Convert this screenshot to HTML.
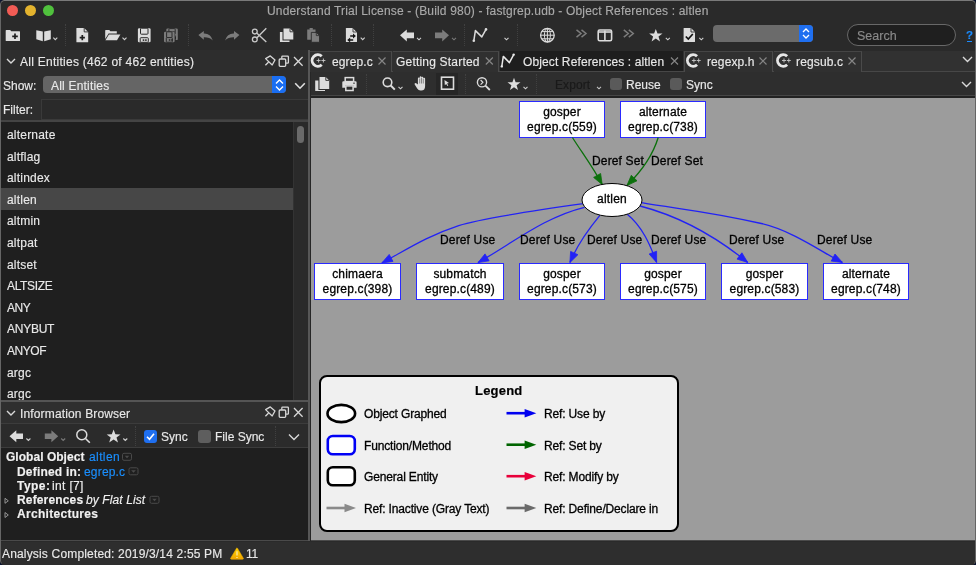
<!DOCTYPE html>
<html><head><meta charset="utf-8">
<style>
html,body{margin:0;padding:0;}
body{width:976px;height:565px;overflow:hidden;background:#0b1430;position:relative;font-family:"Liberation Sans",sans-serif;}
#win{position:absolute;left:0;top:0;width:976px;height:565px;background:#2a2a2a;border-radius:4.5px;overflow:hidden;}
.a{position:absolute;}
.t{position:absolute;font-size:12px;line-height:12px;white-space:nowrap;color:#e8e8e8;will-change:transform;-webkit-text-stroke:0.15px currentColor;}
svg{position:absolute;overflow:visible;}
.sep{position:absolute;width:0;border-left:1px dotted #404040;}
.g{position:absolute;will-change:transform;-webkit-text-stroke:0.3px currentColor;font-size:12px;line-height:14.5px;letter-spacing:0.15px;color:#000;text-align:center;white-space:nowrap;}
.node{position:absolute;background:#fff;border:1px solid #2a2aff;box-sizing:border-box;}
</style></head><body>
<div id="win">
<!-- title bar -->

<div class="a" style="left:7px;top:5px;width:11px;height:11px;border-radius:50%;background:#f25c55"></div>
<div class="a" style="left:25px;top:5px;width:11px;height:11px;border-radius:50%;background:#e3b32e"></div>
<div class="a" style="left:43px;top:5px;width:11px;height:11px;border-radius:50%;background:#50c13d"></div>
<div class="t" style="left:266.5px;top:5px;color:#a9a9a9;letter-spacing:0.17px">Understand Trial License - (Build 980) - fastgrep.udb - Object References : altlen</div>

<!-- toolbar separators -->
<div class="sep" style="left:65px;top:24px;height:22px"></div>
<div class="sep" style="left:188px;top:24px;height:22px"></div>
<div class="sep" style="left:331px;top:24px;height:22px"></div>
<div class="sep" style="left:373px;top:24px;height:22px"></div>
<div class="sep" style="left:464px;top:24px;height:22px"></div>
<div class="sep" style="left:517px;top:24px;height:22px"></div>

<!-- combo + search -->
<div class="a" style="left:713px;top:25px;width:100px;height:17px;border-radius:4px;background:#6b6b6b;overflow:hidden">
  <div class="a" style="left:86px;top:0;width:14px;height:17px;background:#1f6ff0"></div>
</div>
<svg style="left:799px;top:26px" width="14" height="15" viewBox="0 0 14 15"><path d="M4 6 L7 3 L10 6 M4 9 L7 12 L10 9" fill="none" stroke="#fff" stroke-width="1.3"/></svg>
<div class="a" style="left:847px;top:24px;width:109px;height:22px;border-radius:11px;border:1.5px solid #686868;box-sizing:border-box;background:#1f1f1f"></div>
<div class="t" style="left:857px;top:30px;font-size:12.5px;color:#8a8a8a">Search</div>
<div class="t" style="left:966.2px;top:30px;color:#1a8cff;font-weight:bold;font-size:11.5px;line-height:11.5px">?</div>
<div class="a" style="left:966.8px;top:41px;width:5.4px;height:1px;background:#1a8cff"></div>

<!-- left panel -->
<div class="a" style="left:0;top:50px;width:309px;height:491px;background:#2d2d2d"></div>

<div class="t" style="left:20px;top:55.5px;letter-spacing:0.26px;color:#e8e8e8">All Entities (462 of 462 entities)</div>
<svg style="left:6px;top:58px" width="10" height="7" viewBox="0 0 10 7"><path d="M1 1 L5 5 L9 1" fill="none" stroke="#d8d8d8" stroke-width="1.4"/></svg>
<div class="t" style="left:3px;top:80px;letter-spacing:0px">Show:</div>
<div class="a" style="left:43.3px;top:76.2px;width:243px;height:17.3px;border-radius:4px;background:#656565;overflow:hidden">
  <div class="a" style="left:228.8px;top:0;width:15px;height:18px;background:#1a6ef2"></div>
</div>
<svg style="left:271.8px;top:76.8px" width="15" height="16" viewBox="0 0 15 16"><path d="M4 6.5 L7.5 3 L11 6.5 M4 9.5 L7.5 13 L11 9.5" fill="none" stroke="#fff" stroke-width="1.3"/></svg>
<div class="t" style="left:51px;top:80px;letter-spacing:0.2px;color:#e8e8e8">All Entities</div>
<svg style="left:294.2px;top:82px" width="12" height="8" viewBox="0 0 12 8"><path d="M1.2 1.2 L6 6.2 L10.8 1.2" fill="none" stroke="#e0e0e0" stroke-width="1.6"/></svg>
<div class="t" style="left:3px;top:104px">Filter:</div>
<div class="a" style="left:41px;top:99px;width:268px;height:21px;background:#2a2a2a;border:1px solid #3a3a3a;border-right:none;box-sizing:border-box"></div>
<div class="a" style="left:0px;top:120px;width:309px;height:2px;background:#444"></div>
<!-- list -->
<div class="a" style="left:1px;top:122px;width:307px;height:278px;background:#1f1f1f"></div>
<div class="a" style="left:293px;top:122px;width:15px;height:278px;background:#2a2a2a;border-left:1px solid #333"></div>
<div class="a" style="left:297px;top:126px;width:7px;height:17px;border-radius:4px;background:#6a6a6a"></div>
<div class="a" style="left:1px;top:188px;width:292px;height:22px;background:#474747"></div>
<div class="t" style="left:7px;top:129px;letter-spacing:0.2px">alternate</div>
<div class="t" style="left:7px;top:150.6px;letter-spacing:0.2px">altflag</div>
<div class="t" style="left:7px;top:172.2px;letter-spacing:0.2px">altindex</div>
<div class="t" style="left:7px;top:193.8px;letter-spacing:0.2px">altlen</div>
<div class="t" style="left:7px;top:215.4px;letter-spacing:0.2px">altmin</div>
<div class="t" style="left:7px;top:237px;letter-spacing:0.2px">altpat</div>
<div class="t" style="left:7px;top:258.6px;letter-spacing:0.2px">altset</div>
<div class="t" style="left:7px;top:280.2px;letter-spacing:-0.35px">ALTSIZE</div>
<div class="t" style="left:7px;top:301.8px;letter-spacing:-0.45px">ANY</div>
<div class="t" style="left:7px;top:323.4px;letter-spacing:-0.25px">ANYBUT</div>
<div class="t" style="left:7px;top:345px;letter-spacing:-0.45px">ANYOF</div>
<div class="t" style="left:7px;top:366.6px;letter-spacing:0.2px">argc</div>
<div class="t" style="left:7px;top:388.2px;letter-spacing:0.2px">argc</div>

<!-- info browser -->
<div class="a" style="left:0;top:400px;width:309px;height:2px;background:#555"></div>
<div class="a" style="left:1px;top:402px;width:308px;height:21px;background:#2f2f2f"></div>
<div class="a" style="left:1px;top:423px;width:308px;height:1px;background:#3c3c3c"></div>
<div class="t" style="left:20px;top:407.5px;letter-spacing:0.15px">Information Browser</div>
<svg style="left:6px;top:410px" width="10" height="7" viewBox="0 0 10 7"><path d="M1 1 L5 5 L9 1" fill="none" stroke="#d8d8d8" stroke-width="1.4"/></svg>
<div class="a" style="left:1px;top:424px;width:308px;height:23px;background:#2b2b2b"></div>
<div class="a" style="left:1px;top:447px;width:308px;height:1px;background:#3c3c3c"></div>
<div class="sep" style="left:135px;top:426px;height:20px"></div>
<div class="sep" style="left:275px;top:426px;height:20px"></div>
<div class="a" style="left:144px;top:430px;width:13px;height:13px;border-radius:3px;background:#1f6ff0"></div>
<svg style="left:144px;top:430px" width="13" height="13" viewBox="0 0 13 13"><path d="M3 6.8 L5.5 9.3 L10 3.8" fill="none" stroke="#fff" stroke-width="1.6"/></svg>
<div class="t" style="left:161px;top:431px">Sync</div>
<div class="a" style="left:198px;top:430px;width:13px;height:13px;border-radius:3px;background:#5e5e5e"></div>
<div class="t" style="left:215px;top:431px">File Sync</div>
<svg style="left:288px;top:433px" width="12" height="8" viewBox="0 0 12 8"><path d="M1 1.5 L6 6.5 L11 1.5" fill="none" stroke="#d8d8d8" stroke-width="1.4"/></svg>
<div class="a" style="left:1px;top:448px;width:307px;height:93px;background:#1f1f1f"></div>
<div class="t" style="left:6px;top:451px;font-weight:bold;color:#f0f0f0;letter-spacing:0.03px">Global Object</div>
<div class="t" style="left:88.8px;top:451px;color:#1a8fff;letter-spacing:0.4px">altlen</div>
<div class="t" style="left:16.7px;top:466px;font-weight:bold;color:#f0f0f0;letter-spacing:0.2px">Defined in:</div>
<div class="t" style="left:83.6px;top:466px;color:#1a8fff;letter-spacing:0.18px">egrep.c</div>
<div class="t" style="left:17.2px;top:480px;font-weight:bold;color:#f0f0f0;letter-spacing:0.45px">Type:</div>
<div class="t" style="left:52.3px;top:480px;color:#f0f0f0;letter-spacing:0.35px">int [7]</div>
<div class="t" style="left:16.7px;top:494px;font-weight:bold;color:#f0f0f0;letter-spacing:0.15px">References</div>
<div class="t" style="left:86.3px;top:494px;font-style:italic;color:#f0f0f0;letter-spacing:0.1px">by Flat List</div>
<div class="t" style="left:16.7px;top:508px;font-weight:bold;color:#f0f0f0;letter-spacing:0.3px">Architectures</div>

<!-- status bar -->
<div class="a" style="left:0;top:540.2px;width:976px;height:1.3px;background:#4a4a4a"></div>
<div class="a" style="left:0;top:541.5px;width:976px;height:23.5px;background:#2e2e2e"></div>
<div class="t" style="left:2.3px;top:548px;letter-spacing:0.17px">Analysis Completed: 2019/3/14 2:55 PM</div>
<svg style="left:229.6px;top:546.6px" width="15" height="13" viewBox="0 0 15 13"><defs><linearGradient id="wg" x1="0" y1="0" x2="0" y2="1"><stop offset="0" stop-color="#ffd400"/><stop offset="1" stop-color="#f0a400"/></linearGradient></defs><path d="M6.6 1.2 Q7 0.4 7.4 1.2 L13.3 11.2 Q13.7 12.2 12.6 12.2 L1.4 12.2 Q0.3 12.2 0.7 11.2 Z" fill="url(#wg)" stroke="#f0b000" stroke-width="0.6"/><path d="M7 4.2 V8.6 M7 9.9 V11" stroke="#fbe9a8" stroke-width="1.3"/></svg>
<div class="t" style="left:245.6px;top:548px;letter-spacing:-0.4px">11</div>

<!-- splitter -->
<div class="a" style="left:308px;top:50px;width:2px;height:491px;background:#575757"></div>
<div class="a" style="left:310px;top:50px;width:1px;height:491px;background:#262626"></div>

<!-- tab bar -->
<div class="a" style="left:311px;top:50.7px;width:665px;height:20.3px;background:#313131"></div>
<div class="a" style="left:311px;top:70.5px;width:665px;height:1.4px;background:#474747"></div>
<div class="a" style="left:310px;top:51px;width:82px;height:20px;background:#303030;border-right:1px solid #4a4a4a;border-top:1px solid #454545;box-sizing:border-box;height:21px"></div>
<div class="t" style="left:332px;top:56.2px;letter-spacing:0.1px">egrep.c</div>
<div class="a" style="left:393px;top:51px;width:106px;height:20px;background:#303030;border-right:1px solid #4a4a4a;border-top:1px solid #454545;box-sizing:border-box;height:21px"></div>
<div class="t" style="left:396px;top:56.2px;letter-spacing:0.2px">Getting Started</div>
<div class="a" style="left:500px;top:51px;width:183px;height:20px;background:#1e1e1e"></div>
<div class="t" style="left:523px;top:56.2px;letter-spacing:0.12px">Object References : altlen</div>
<div class="a" style="left:684px;top:51px;width:89px;height:20px;background:#303030;border-right:1px solid #4a4a4a;border-left:1px solid #4a4a4a;border-top:1px solid #454545;box-sizing:border-box;height:21px"></div>
<div class="t" style="left:707px;top:56.2px;letter-spacing:0.1px">regexp.h</div>
<div class="a" style="left:774px;top:51px;width:88px;height:20px;background:#303030;border-right:1px solid #4a4a4a;border-top:1px solid #454545;box-sizing:border-box;height:21px"></div>
<div class="t" style="left:796px;top:56.2px;letter-spacing:0.15px">regsub.c</div>
<svg style="left:962px;top:55.5px" width="11" height="7" viewBox="0 0 11 7"><path d="M1 1 L5.5 5.5 L10 1" fill="none" stroke="#d8d8d8" stroke-width="1.4"/></svg>

<!-- graph toolbar -->
<div class="a" style="left:311px;top:72px;width:665px;height:23px;background:#2e2e2e"></div>
<div class="a" style="left:311px;top:95px;width:665px;height:1px;background:#464646"></div>
<div class="a" style="left:311px;top:96px;width:665px;height:2px;background:#222"></div>
<div class="sep" style="left:366px;top:74px;height:20px"></div>
<div class="sep" style="left:465px;top:74px;height:20px"></div>
<div class="sep" style="left:536px;top:74px;height:20px"></div>
<div class="a" style="left:436px;top:73px;width:22px;height:22px;background:#262626"></div>
<div class="t" style="left:555px;top:79px;color:#1a1a1a;letter-spacing:0.1px">Export</div>
<div class="a" style="left:610px;top:78px;width:12px;height:12px;border-radius:3px;background:#5a5a5a"></div>
<div class="t" style="left:626px;top:79px">Reuse</div>
<div class="a" style="left:670px;top:78px;width:12px;height:12px;border-radius:3px;background:#5a5a5a"></div>
<div class="t" style="left:686px;top:79px">Sync</div>
<svg style="left:961.2px;top:80.8px" width="11" height="7" viewBox="0 0 11 7"><path d="M1 1 L5.5 5.5 L10 1" fill="none" stroke="#d8d8d8" stroke-width="1.4"/></svg>

<!-- graph area -->
<div class="a" style="left:311px;top:97.8px;width:664px;height:442.4px;background:#9c9c9c"></div>


<!-- nodes -->
<div class="node" style="left:519px;top:101px;width:86px;height:37px"></div>
<div class="g" style="left:519px;top:105px;width:86px">gosper<br>egrep.c(559)</div>
<div class="node" style="left:620px;top:101px;width:86px;height:37px"></div>
<div class="g" style="left:620px;top:105px;width:86px">alternate<br>egrep.c(738)</div>

<div class="node" style="left:314px;top:263px;width:87px;height:37px"></div>
<div class="g" style="left:314px;top:267px;width:87px">chimaera<br>egrep.c(398)</div>
<div class="node" style="left:416px;top:263px;width:88px;height:37px"></div>
<div class="g" style="left:416px;top:267px;width:88px">submatch<br>egrep.c(489)</div>
<div class="node" style="left:519px;top:263px;width:86px;height:37px"></div>
<div class="g" style="left:519px;top:267px;width:86px">gosper<br>egrep.c(573)</div>
<div class="node" style="left:620px;top:263px;width:86px;height:37px"></div>
<div class="g" style="left:620px;top:267px;width:86px">gosper<br>egrep.c(575)</div>
<div class="node" style="left:721px;top:263px;width:87px;height:37px"></div>
<div class="g" style="left:721px;top:267px;width:87px">gosper<br>egrep.c(583)</div>
<div class="node" style="left:823px;top:263px;width:86px;height:37px"></div>
<div class="g" style="left:823px;top:267px;width:86px">alternate<br>egrep.c(748)</div>

<svg style="left:0;top:0" width="976" height="565" viewBox="0 0 976 565">
<path d="M583.3,203.7 C526.7,211.6 479.4,218.9 458.7,225.6 C427.0,235.9 404.6,250.9 381.9,262.9" fill="none" stroke="#2222f5" stroke-width="1.3"/>
<path d="M381.9,262.9 L389.2,254.4 L393.0,261.4 Z" fill="#2222f5" stroke="#2222f5" stroke-width="0.8"/>
<path d="M584.5,207.3 C544.7,216.9 512.9,242.9 478.0,262.6" fill="none" stroke="#2222f5" stroke-width="1.3"/>
<path d="M478.0,262.6 L485.0,253.9 L489.1,260.8 Z" fill="#2222f5" stroke="#2222f5" stroke-width="0.8"/>
<path d="M599.9,215.3 C588.0,229.7 577.0,245.1 569.9,262.6" fill="none" stroke="#2222f5" stroke-width="1.3"/>
<path d="M569.9,262.6 L570.6,251.4 L577.9,254.7 Z" fill="#2222f5" stroke="#2222f5" stroke-width="0.8"/>
<path d="M627.2,214.3 C642.3,226.5 650.1,244.6 656.6,262.4" fill="none" stroke="#2222f5" stroke-width="1.3"/>
<path d="M656.6,262.4 L649.1,254.0 L656.6,251.2 Z" fill="#2222f5" stroke="#2222f5" stroke-width="0.8"/>
<path d="M640.1,206.0 C679.9,216.4 715.9,236.6 747.7,262.4" fill="none" stroke="#2222f5" stroke-width="1.3"/>
<path d="M747.7,262.4 L737.0,259.1 L741.9,252.8 Z" fill="#2222f5" stroke="#2222f5" stroke-width="0.8"/>
<path d="M641.5,202.6 C677.3,209.0 704.8,210.6 761.3,223.5 C793.7,230.9 825.4,254.6 842.4,262.4" fill="none" stroke="#2222f5" stroke-width="1.3"/>
<path d="M842.4,262.4 L831.2,261.1 L835.0,254.0 Z" fill="#2222f5" stroke="#2222f5" stroke-width="0.8"/>
<path d="M572.4,137.5 C582.4,153.2 593.6,168.1 602.2,184.6" fill="none" stroke="#0b700b" stroke-width="1.3"/>
<path d="M602.2,184.6 L593.6,177.4 L600.6,173.5 Z" fill="#0b700b" stroke="#0b700b" stroke-width="0.8"/>
<path d="M658.2,137.5 C652.5,156.4 640.8,172.0 626.9,185.6" fill="none" stroke="#0b700b" stroke-width="1.3"/>
<path d="M626.9,185.6 L631.3,175.3 L637.0,180.8 Z" fill="#0b700b" stroke="#0b700b" stroke-width="0.8"/>
  <ellipse cx="612" cy="200" rx="30" ry="16.5" fill="#fff" stroke="#000" stroke-width="1"/>
</svg>
<div class="g" style="left:582px;top:192px;width:60px;letter-spacing:0.2px">altlen</div>

<div class="g" style="left:592px;top:154px;">Deref Set</div>
<div class="g" style="left:651px;top:154px;">Deref Set</div>
<div class="g" style="left:440px;top:233px;">Deref Use</div>
<div class="g" style="left:520px;top:233px;">Deref Use</div>
<div class="g" style="left:587px;top:233px;">Deref Use</div>
<div class="g" style="left:651px;top:233px;">Deref Use</div>
<div class="g" style="left:729px;top:233px;">Deref Use</div>
<div class="g" style="left:817px;top:233px;">Deref Use</div>

<!-- legend -->
<div class="a" style="left:319px;top:375px;width:360px;height:157px;border:2px solid #000;border-radius:8px;background:#f0f0f0;box-sizing:border-box"></div>
<div class="t" style="left:474.8px;top:384px;font-weight:bold;font-size:13px;line-height:13px;color:#000;letter-spacing:0.2px;-webkit-text-stroke:0.2px #000">Legend</div>
<svg style="left:0;top:0" width="976" height="565" viewBox="0 0 976 565">
 <ellipse cx="341.3" cy="413.5" rx="13.8" ry="8.6" fill="#fff" stroke="#000" stroke-width="2.6"/>
 <rect x="327.8" y="436" width="27" height="18.2" rx="5" fill="#fff" stroke="#0000f5" stroke-width="2.6"/>
 <rect x="327.8" y="467.3" width="27" height="18" rx="5" fill="#fff" stroke="#000" stroke-width="2.6"/>
 <path d="M326.5 508 H346" stroke="#8a8a8a" stroke-width="2.6"/><path d="M356 508 L344.5 503.8 V512.2 Z" fill="#8a8a8a"/>
 <path d="M506.5 413.2 H526" stroke="#0000f0" stroke-width="2.6"/><path d="M536.3 413.2 L524.6 409 V417.4 Z" fill="#0000f0"/>
 <path d="M506.5 444.7 H526" stroke="#006400" stroke-width="2.6"/><path d="M536.3 444.7 L524.6 440.5 V448.9 Z" fill="#006400"/>
 <path d="M506.5 476.2 H526" stroke="#e8003a" stroke-width="2.6"/><path d="M536.3 476.2 L524.6 472 V480.4 Z" fill="#e8003a"/>
 <path d="M506.5 508 H526" stroke="#6a6a6a" stroke-width="2.6"/><path d="M536.3 508 L524.6 503.8 V512.2 Z" fill="#6a6a6a"/>
</svg>
<div class="t" style="left:364px;top:408px;color:#000;letter-spacing:-0.15px;-webkit-text-stroke:0.3px #000">Object Graphed</div>
<div class="t" style="left:364px;top:440px;color:#000;letter-spacing:-0.15px;-webkit-text-stroke:0.3px #000">Function/Method</div>
<div class="t" style="left:364px;top:471px;color:#000;letter-spacing:-0.15px;-webkit-text-stroke:0.3px #000">General Entity</div>
<div class="t" style="left:364px;top:503px;color:#000;letter-spacing:-0.15px;-webkit-text-stroke:0.3px #000">Ref: Inactive (Gray Text)</div>
<div class="t" style="left:544px;top:408px;color:#000;letter-spacing:-0.15px;-webkit-text-stroke:0.3px #000">Ref: Use by</div>
<div class="t" style="left:544px;top:440px;color:#000;letter-spacing:-0.15px;-webkit-text-stroke:0.3px #000">Ref: Set by</div>
<div class="t" style="left:544px;top:471px;color:#000;letter-spacing:-0.15px;-webkit-text-stroke:0.3px #000">Ref: Modify by</div>
<div class="t" style="left:544px;top:503px;color:#000;letter-spacing:-0.15px;-webkit-text-stroke:0.3px #000">Ref: Define/Declare in</div>

<!-- ===== main toolbar icons ===== -->
<svg style="left:0;top:0" width="976" height="50" viewBox="0 0 976 50">
<g fill="#dcdcdc">
 <!-- folder+ -->
 <path d="M5.7 30.5 Q5.7 29.9 6.3 29.9 H10.2 L11.2 31.2 H19.4 Q20 31.2 20 31.8 V40.4 Q20 41 19.4 41 H6.3 Q5.7 41 5.7 40.4 Z"/>
 <!-- book -->
 <path d="M36.3 30.2 L42.8 31.4 V41.2 L36.3 39.2 Z M44.2 31.4 L50.8 30.2 V39.2 L44.2 41.2 Z"/>
 <!-- doc+ -->
 <path d="M76.4 28.4 Q76.4 27.9 76.9 27.9 H84.2 L88.2 31.9 V41.8 Q88.2 42.3 87.7 42.3 H76.9 Q76.4 42.3 76.4 41.8 Z"/>
 <!-- open folder -->
 <path d="M105.2 30.6 Q105.2 30 105.8 30 H109.3 L110.3 31.2 H116.8 V33.6 H108.6 L105.2 39 Z"/>
 <path d="M108.9 34.4 H120.4 L117 40.2 H105.4 Z"/>
 <!-- scissors -->
 <circle cx="254.8" cy="31.6" r="2.4" fill="none" stroke="#c8c8c8" stroke-width="1.3"/>
 <circle cx="254.8" cy="39.4" r="2.4" fill="none" stroke="#c8c8c8" stroke-width="1.3"/>
 <path d="M256.7 33 L266.3 42 M256.7 38 L266.3 28.3" stroke="#c8c8c8" stroke-width="1.4" fill="none"/>
 <!-- copy -->
 <path d="M283.5 28.5 H290 L293.3 31.8 V39.5 H283.5 Z"/>
 <path d="M279.9 32 H282.5 V40.5 H289.5 V41.9 H280.4 Q279.9 41.9 279.9 41.4 Z"/>
 <!-- doc arrows -->
 <path d="M345.9 28.5 Q345.9 28 346.4 28 H353 L357 32 V41.5 Q357 42 356.5 42 H346.4 Q345.9 42 345.9 41.5 Z"/>
 <!-- back arrow -->
 <path d="M400 35.3 L406.8 29.4 V32.6 H414 V38.2 H406.8 V41.4 Z"/>
 <!-- N graph -->
 <path d="M473.8 40.8 L475.4 30.6 L481.8 36.9 L486 29.4" fill="none" stroke="#dcdcdc" stroke-width="1.5" stroke-linejoin="round"/>
 <circle cx="473.8" cy="40.8" r="1.3"/><circle cx="486" cy="29.4" r="1.3"/>
 <!-- globe -->
 <circle cx="547.4" cy="35.2" r="6.8" fill="none" stroke="#dcdcdc" stroke-width="1.3"/>
 <ellipse cx="547.4" cy="35.2" rx="3" ry="6.8" fill="none" stroke="#dcdcdc" stroke-width="1"/>
 <path d="M547.4 28.4 V42 M540.6 35.2 H554.2 M541.5 31.6 H553.3 M541.5 38.8 H553.3" stroke="#dcdcdc" stroke-width="1" fill="none"/>
 <!-- columns -->
 <rect x="598.2" y="30" width="13.4" height="10.8" rx="1.5" fill="none" stroke="#dcdcdc" stroke-width="1.6"/>
 <path d="M604.9 30.5 V40.5" stroke="#dcdcdc" stroke-width="1.6"/>
 <path d="M598.2 32 H611.6" stroke="#dcdcdc" stroke-width="1.6"/>
 <!-- star -->
 <path d="M655.8 29 L657.5 33.5 L662.5 33.6 L658.5 36.6 L660 41.5 L655.8 38.6 L651.6 41.5 L653.1 36.6 L649.1 33.6 L654.1 33.5 Z"/>
 <!-- doc check -->
 <path d="M683.6 28.5 Q683.6 28 684.1 28 H691 L695 32 V41.5 Q695 42 694.5 42 H684.1 Q683.6 42 683.6 41.5 Z"/>
</g>
<g fill="#7c7c7c">
 <!-- undo -->
 <path d="M198.4 35 L203.8 31 V33.6 Q210.5 33.3 212.8 40.5 Q209.5 37 203.8 37.2 V39.8 Z"/>
 <!-- redo -->
 <path d="M239.4 35 L234 31 V33.6 Q227.3 33.3 225 40.5 Q228.3 37 234 37.2 V39.8 Z"/>
 <!-- paste -->
 <path d="M307.2 29.5 H315.5 V39.8 H307.7 Q307.2 39.8 307.2 39.3 Z"/>
 <path d="M309.6 28 H312.8 V30 H309.6 Z"/>
 <path d="M311.3 32.4 H316.3 L319.5 35.6 V42.3 H311.3 Z" stroke="#2a2a2a" stroke-width="0.9"/>
 <path d="M316.3 32.4 V35.6 H319.5" stroke="#2a2a2a" stroke-width="0.8" fill="none"/>
 <!-- forward arrow -->
 <path d="M449 35.3 L442.2 29.4 V32.6 H435 V38.2 H442.2 V41.4 Z"/>
 <!-- >> -->
 <path d="M576.5 29.8 L581 33.5 L576.5 37.2 M581.5 29.8 L586 33.5 L581.5 37.2" fill="none" stroke="#7c7c7c" stroke-width="1.5"/>
 <path d="M623.8 29.8 L628.3 33.5 L623.8 37.2 M628.8 29.8 L633.3 33.5 L628.8 37.2" fill="none" stroke="#7c7c7c" stroke-width="1.5"/>
</g>
<!-- dark details -->
<g stroke="#1e1e1e" fill="none">
 <path d="M15 33.5 V39 M12.2 36.3 H17.8" stroke-width="1.7"/>
 <path d="M84.2 27.9 V31.9 H88.2" stroke-width="0.9" stroke="#2a2a2a"/>
 <path d="M82.3 35 V40.2 M79.7 37.6 H84.9" stroke-width="1.7"/>
 <path d="M290 28.5 V31.8 H293.3" stroke-width="0.9" stroke="#2a2a2a"/>
 <path d="M691 28 V32 H695" stroke-width="0.9" stroke="#2a2a2a"/>
 <path d="M685.8 36.5 L688.3 39 L692.8 34" stroke-width="1.7" stroke="#111"/>
</g>
<!-- carets -->
<g fill="none" stroke="#cfcfcf" stroke-width="1.1">
 <path d="M53.3 37.6 L55.3 39.6 L57.3 37.6"/>
 <path d="M122.5 37.6 L124.5 39.6 L126.5 37.6"/>
 <path d="M360.7 37.6 L362.7 39.6 L364.7 37.6"/>
 <path d="M417 37.8 L419 39.8 L421 37.8"/>
 <path d="M504.5 37.8 L506.5 39.8 L508.5 37.8"/>
 <path d="M665.8 37.8 L667.8 39.8 L669.8 37.8"/>
 <path d="M699.3 37.8 L701.3 39.8 L703.3 37.8"/>
</g>
<path d="M452 37.8 L454 39.8 L456 37.8" fill="none" stroke="#777" stroke-width="1.1"/>
</svg>

<svg style="left:0;top:0" width="976" height="50" viewBox="0 0 976 50"><g fill="#151515"><path d="M350.2 35.3 H353 V33.6 L355.9 36 L353 38.4 V36.7 H350.2 Z"/><path d="M353.2 39.3 H350.2 V37.6 L347.2 40 L350.2 42.4 V40.7 H353.2 Z"/></g>
<path d="M353 28 L357 32 H353 Z" fill="#dcdcdc" stroke="#2a2a2a" stroke-width="0.8"/>
</svg>
<!-- floppies -->
<svg style="left:0;top:0" width="976" height="50" viewBox="0 0 976 50"><rect x="137.9" y="28.2" width="12.7" height="14.1" rx="1.2" fill="#dcdcdc"/><rect x="140.5" y="28.2" width="7.499999999999999" height="6" rx="0.8" fill="#dcdcdc" stroke="#2a2a2a" stroke-width="1"/><rect x="140.20000000000002" y="37.699999999999996" width="8.1" height="4.6" rx="0.8" fill="#dcdcdc" stroke="#2a2a2a" stroke-width="1"/><rect x="142.70000000000002" y="39.3" width="1.6" height="1.6" fill="#2a2a2a"/><rect x="145.1" y="39.3" width="1.6" height="1.6" fill="#2a2a2a"/><rect x="166.3" y="28.6" width="11.5" height="11.5" rx="1.2" fill="#7c7c7c"/><rect x="168.9" y="28.6" width="6.3" height="6" rx="0.8" fill="#7c7c7c" stroke="#2a2a2a" stroke-width="1"/><rect x="168.60000000000002" y="35.5" width="6.9" height="4.6" rx="0.8" fill="#7c7c7c" stroke="#2a2a2a" stroke-width="1"/><rect x="171.10000000000002" y="37.1" width="1.6" height="1.6" fill="#2a2a2a"/><rect x="173.5" y="37.1" width="1.6" height="1.6" fill="#2a2a2a"/><rect x="163.2" y="31.2" width="11.8" height="11.1" rx="1" fill="#2a2a2a"/><rect x="164" y="31.8" width="10.6" height="10.4" rx="1.2" fill="#7c7c7c"/><rect x="166.6" y="31.8" width="5.3999999999999995" height="6" rx="0.8" fill="#7c7c7c" stroke="#2a2a2a" stroke-width="1"/><rect x="166.3" y="37.6" width="6.0" height="4.6" rx="0.8" fill="#7c7c7c" stroke="#2a2a2a" stroke-width="1"/><rect x="168.8" y="39.2" width="1.6" height="1.6" fill="#2a2a2a"/><rect x="171.2" y="39.2" width="1.6" height="1.6" fill="#2a2a2a"/></svg>
<!-- ===== panel header icons ===== -->
<svg style="left:0;top:0" width="976" height="565" viewBox="0 0 976 565">
<g fill="none" stroke="#d8d8d8" stroke-width="1.3">
 <!-- pin All Entities -->
 <path d="M265.6 58.6 L270.3 55.9 L275 59.9 L272.2 65 Z M265.6 58.6 L272.2 65 M268.4 62.2 L265.4 65.3" stroke-linejoin="round" stroke-width="1.25"/>
 <rect x="279.2" y="59" width="6.5" height="7.3" rx="1"/>
 <path d="M281.8 58.8 V57 Q281.8 56.2 282.6 56.2 H287.6 Q288.4 56.2 288.4 57 V62.4 Q288.4 63.2 287.6 63.2 H286"/>
 <path d="M294 57 L302.6 65.8 M302.6 57 L294 65.8"/>
 <!-- pin info -->
 <path d="M265.6 409.6 L270.3 406.9 L275 410.9 L272.2 416 Z M265.6 409.6 L272.2 416 M268.4 413.2 L265.4 416.3" stroke-linejoin="round" stroke-width="1.25"/>
 <rect x="279.2" y="410" width="6.5" height="7.3" rx="1"/>
 <path d="M281.8 409.8 V408 Q281.8 407.2 282.6 407.2 H287.6 Q288.4 407.2 288.4 408 V413.4 Q288.4 414.2 287.6 414.2 H286"/>
 <path d="M294 408 L302.6 416.8 M302.6 408 L294 416.8"/>
</g>
<!-- tab close x -->
<g fill="none" stroke="#858585" stroke-width="1.2">
 <path d="M378.5 57.5 L385.5 64.5 M385.5 57.5 L378.5 64.5"/>
 <path d="M485.8 57.5 L492.8 64.5 M492.8 57.5 L485.8 64.5"/>
 <path d="M671 57.5 L678 64.5 M678 57.5 L671 64.5"/>
 <path d="M759.5 57.5 L766.5 64.5 M766.5 57.5 L759.5 64.5"/>
 <path d="M848.5 57.5 L855.5 64.5 M855.5 57.5 L848.5 64.5"/>
</g>
<!-- C++ icons -->
<g fill="none" stroke="#e6e6e6">
 <path d="M321.75 56.23 A5.75 5.75 0 1 0 321.75 64.77" stroke-width="2.9"/>
 <path d="M316.60 60.5 H320.60 M318.60 58.5 V62.5 M321.40 60.5 H325.40 M323.40 58.5 V62.5" stroke-width="0.9" stroke="#c8c8c8"/>
 <path d="M697.05 56.23 A5.75 5.75 0 1 0 697.05 64.77" stroke-width="2.9"/>
 <path d="M691.90 60.5 H695.90 M693.90 58.5 V62.5 M696.70 60.5 H700.70 M698.70 58.5 V62.5" stroke-width="0.9" stroke="#c8c8c8"/>
 <path d="M787.15 56.23 A5.75 5.75 0 1 0 787.15 64.77" stroke-width="2.9"/>
 <path d="M782.00 60.5 H786.00 M784.00 58.5 V62.5 M786.80 60.5 H790.80 M788.80 58.5 V62.5" stroke-width="0.9" stroke="#c8c8c8"/>
</g>
<!-- active tab graph icon -->
<path d="M501.8 66.4 L503.3 56.4 L509.4 62.6 L513.7 54.6" fill="none" stroke="#e8e8e8" stroke-width="1.5" stroke-linejoin="round"/><circle cx="501.8" cy="66.4" r="1.2" fill="#e8e8e8"/><circle cx="513.7" cy="54.6" r="1.2" fill="#e8e8e8"/>

<!-- graph toolbar icons -->
<g fill="#dcdcdc">
 <path d="M319.5 77 H325.8 L329.2 80.4 V89 H319.5 Z"/>
 <path d="M315.2 80.5 H318.4 V90 H325 V91 H315.7 Q315.2 91 315.2 90.5 Z"/>
 <!-- print -->
 <path d="M343.3 81.2 Q342.3 81.2 342.3 82.2 V87.8 H345 V85.3 H353.6 V87.8 H356.6 V82.2 Q356.6 81.2 355.6 81.2 Z"/>
 <!-- hand -->
 <path d="M417.9 84.5 V78.6 Q417.9 77.6 418.8 77.6 Q419.7 77.6 419.7 78.6 V77.2 Q419.7 76.2 420.6 76.2 Q421.5 76.2 421.5 77.2 V77.8 Q421.5 76.8 422.4 76.8 Q423.3 76.8 423.3 77.8 V78.8 Q423.3 77.8 424.2 77.8 Q425.1 77.8 425.1 78.8 V86 Q425.1 90.6 421.3 90.6 H420.4 Q418.5 90.6 417.2 88.6 L414.7 84.6 Q414.2 83.6 415 83.2 Q415.8 82.8 416.6 83.6 Z"/>
 <!-- star -->
 <path d="M514 77.8 L515.6 82.2 L520.5 82.3 L516.6 85.2 L518 90 L514 87.2 L510 90 L511.4 85.2 L507.5 82.3 L512.4 82.2 Z"/>
</g>
<g fill="none" stroke="#2b2b2b" stroke-width="0.9">
 <path d="M325.8 77 V80.4 H329.2"/>
</g>
<g fill="none" stroke="#dcdcdc" stroke-width="1.5"><rect x="345.2" y="77.6" width="8.4" height="4"/><rect x="345.8" y="85.9" width="7.3" height="4.6"/></g>
<rect x="353.3" y="82.6" width="1.4" height="1.2" fill="#2b2b2b"/>
<g fill="none" stroke="#dcdcdc">
 <circle cx="387.5" cy="82.3" r="4.3" stroke-width="1.6"/>
 <path d="M390.7 85.5 L394.8 89.6" stroke-width="2"/>
 <rect x="441.5" y="77.2" width="12" height="12" stroke-width="1.6"/>
 <circle cx="482" cy="82.3" r="4.6" stroke-width="1.4"/>
 <path d="M485.4 85.7 L489.8 90" stroke-width="1.8"/>
 <path d="M480.6 80 L482.9 82.3 L480.6 84.6" stroke-width="1.2"/>
</g>
<path d="M444.5 80 L449 83 L447 83.4 L448.3 85.6 L447.4 86.1 L446.2 83.9 L444.8 85.2 Z" fill="#dcdcdc"/>
<g fill="none" stroke="#cfcfcf" stroke-width="1.1">
 <path d="M398.5 86.8 L400.5 88.8 L402.5 86.8"/>
 <path d="M523.5 86.8 L525.5 88.8 L527.5 86.8"/>
 <path d="M597 86.8 L599 88.8 L601 86.8" stroke="#c0c0c0"/>
</g>

<path d="M419.7 78.6 V83.5 M421.5 77.8 V83.5 M423.3 78.8 V83.5" stroke="#2e2e2e" stroke-width="0.5" fill="none"/>
<!-- info browser toolbar icons -->
<g fill="#dcdcdc">
 <path d="M9.5 436.2 L16.3 430.3 V433.5 H23 V439 H16.3 V442.2 Z"/>
 <path d="M113.6 429.5 L115.4 434.3 L120.5 434.4 L116.5 437.5 L118 442.5 L113.6 439.5 L109.2 442.5 L110.7 437.5 L106.7 434.4 L111.8 434.3 Z"/>
</g>
<path d="M58.2 436.2 L51.4 430.3 V433.5 H44.8 V439 H51.4 V442.2 Z" fill="#7c7c7c"/>
<g fill="none" stroke="#dcdcdc">
 <circle cx="81.8" cy="434.8" r="5" stroke-width="1.5"/>
 <path d="M85.5 438.5 L89.8 442.8" stroke-width="1.6"/>
</g>
<g fill="none" stroke="#cfcfcf" stroke-width="1.1">
 <path d="M26.4 438.5 L28.4 440.5 L30.4 438.5"/>
 <path d="M123.3 438.5 L125.3 440.5 L127.3 438.5"/>
</g>
<path d="M61.2 438.5 L63.2 440.5 L65.2 438.5" fill="none" stroke="#777" stroke-width="1.1"/>

<!-- info content small dropdown boxes and triangles -->
<g fill="none" stroke="#4a4a4a" stroke-width="1">
 <rect x="122.5" y="453.3" width="9" height="7" rx="1.5"/>
 <rect x="129" y="467.8" width="9" height="7" rx="1.5"/>
 <rect x="150" y="496.3" width="9" height="7" rx="1.5"/>
</g>
<g fill="#4a4a4a">
 <path d="M124.7 455.8 H129.3 L127 458.3 Z"/>
 <path d="M131.2 470.3 H135.8 L133.5 472.8 Z"/>
 <path d="M152.2 498.8 H156.8 L154.5 501.3 Z"/>
</g>
<g fill="none" stroke="#a0a0a0" stroke-width="0.9">
 <path d="M5 498.3 L8.3 500.8 L5 503.3 Z"/>
 <path d="M5 512.5 L8.3 515 L5 517.5 Z"/>
</g>
</svg>

<div class="a" style="left:0;top:0;width:976px;height:565px;border:1px solid #666;border-top-color:#7a7a7a;border-bottom-color:#2e2e2e;border-radius:4.5px;box-sizing:border-box"></div>
</div>
</body></html>
